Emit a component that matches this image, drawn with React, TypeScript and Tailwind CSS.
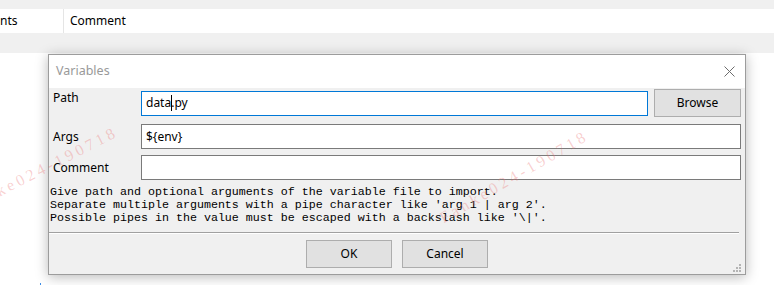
import React from "react";

const ui = { fontFamily: '"Noto Sans", "Open Sans", Arial, sans-serif' };
const mono = { fontFamily: '"Liberation Mono", "DejaVu Sans Mono", monospace' };

function Btn({ label, className = "" }: { label: string; className?: string }) {
  return (
    <div
      className={
        "h-[28px] flex items-center justify-center bg-[#e1e1e1] border border-[#adadad] text-[12px] text-black " +
        className
      }
    >
      {label}
    </div>
  );
}

function Grip() {
  const dots: [number, number][] = [
    [6, 0],
    [3, 3],
    [6, 3],
    [0, 6],
    [3, 6],
    [6, 6],
  ];
  return (
    <svg width="8" height="8" className="absolute right-[4px] bottom-[2px]">
      {dots.map(([x, y], i) => (
        <rect key={i} x={x} y={y} width="2" height="2" fill="#b4b4b4" />
      ))}
    </svg>
  );
}

export default function App() {
  return (
    <div className="relative w-[774px] h-[285px] bg-white overflow-hidden" style={ui}>
      <div className="h-[9px] bg-[#f0f0f0]" />
      <div className="h-[24px] bg-white flex items-center text-[12px] text-black">
        <div className="w-[64px] h-full border-r border-[#e5e5e5] flex items-center">nts</div>
        <div className="pl-[6px]">Comment</div>
      </div>
      <div className="h-[20px] bg-[#f0f0f0]" />

      {/* dialog window */}
      <div className="absolute left-[48px] top-[54px] w-[698px] h-[221px] border border-[#9c9c9c] bg-[#f0f0f0] flex flex-col shadow-[0_2px_12px_rgba(0,0,0,0.28)]">
        <div className="h-[33px] bg-white flex items-center justify-between pl-[7px] pr-[10px]">
          <span className="text-[12.5px] text-[#999999]">Variables</span>
          <svg width="11" height="11" viewBox="0 0 11 11">
            <path d="M0.5 0.5 L10.5 10.5 M10.5 0.5 L0.5 10.5" stroke="#6d6d6d" strokeWidth="1" />
          </svg>
        </div>
        <div className="relative flex-1 flex flex-col text-[12px] text-black">
          {/* Path row */}
          <div className="mt-[1px] h-[28px] flex items-center pr-[4px]">
            <div className="w-[92px] pl-[4px] self-start mt-[1px] leading-[16px]">Path</div>
            <div className="flex-1 h-[25px] bg-white border border-[#0078d7] flex items-center pl-[4px]">
              <span>data</span>
              <span className="inline-block w-[1px] h-[16px] bg-black -mr-[1px]" />
              <span>.py</span>
            </div>
            <Btn label="Browse" className="ml-[6px] w-[87px]" />
          </div>
          {/* Args row */}
          <div className="mt-[7px] flex items-center pr-[4px]">
            <div className="w-[92px] pl-[4px] leading-[16px]">Args</div>
            <div className="flex-1 h-[25px] bg-white border border-[#7a7a7a] flex items-center pl-[4px]">
              {"${env}"}
            </div>
          </div>
          {/* Comment row */}
          <div className="mt-[6px] flex items-center pr-[4px]">
            <div className="w-[92px] pl-[4px] leading-[16px]">Comment</div>
            <div className="flex-1 h-[25px] bg-white border border-[#7a7a7a]" />
          </div>
          {/* help text */}
          <div className="mt-[6px] pl-[1px] text-[11.67px] leading-[13px] whitespace-pre" style={mono}>
            <div>Give path and optional arguments of the variable file to import.</div>
            <div>Separate multiple arguments with a pipe character like 'arg 1 | arg 2'.</div>
            <div>Possible pipes in the value must be escaped with a backslash like '\|'.</div>
          </div>
          <div className="mt-[7px] mr-[6px] h-[1px] bg-[#a0a0a0]" />
          <div className="mr-[6px] h-[1px] bg-white" />
          <div className="mt-[6px] flex justify-center gap-[10px]">
            <Btn label="OK" className="w-[86px]" />
            <Btn label="Cancel" className="w-[86px]" />
          </div>
          <Grip />
        </div>
      </div>

      {/* watermarks */}
      <span
        className="absolute left-[-30px] top-[199px] text-[16px] leading-[16px] tracking-[3.5px] text-[rgba(235,110,110,0.33)] origin-bottom-left -rotate-[27deg] whitespace-nowrap pointer-events-none"
        style={{ fontFamily: '"Liberation Serif", serif' }}
      >
        Fanke024-190718
      </span>
      <span
        className="absolute left-[445px] top-[210px] text-[16px] leading-[16px] tracking-[3.5px] text-[rgba(235,110,110,0.33)] origin-bottom-left -rotate-[30deg] whitespace-nowrap pointer-events-none"
        style={{ fontFamily: '"Liberation Serif", serif' }}
      >
        Fanke024-190718
      </span>

      <div className="absolute left-[40px] top-[283px] w-[1px] h-[2px] bg-[#3c8ce6]" />
    </div>
  );
}
